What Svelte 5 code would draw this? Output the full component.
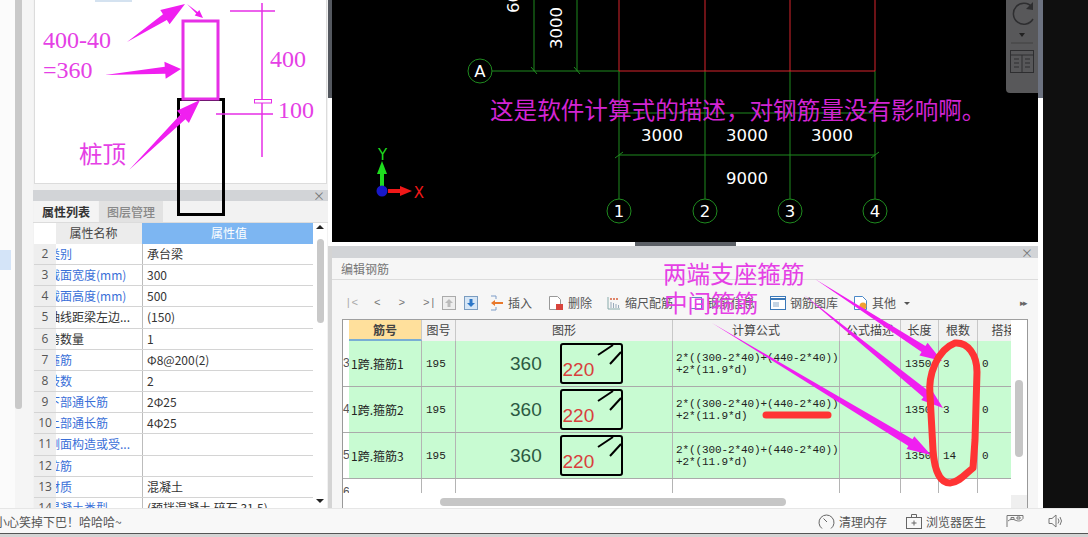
<script>
  const attrs = [
    { n: 2, name: '类别', value: '承台梁', link: true },
    { n: 3, name: '截面宽度(mm)', value: '300', link: true },
    { n: 4, name: '截面高度(mm)', value: '500', link: true },
    { n: 5, name: '轴线距梁左边...', value: '(150)' },
    { n: 6, name: '跨数量', value: '1' },
    { n: 7, name: '箍筋', value: 'Φ8@200(2)', link: true },
    { n: 8, name: '肢数', value: '2', link: true },
    { n: 9, name: '下部通长筋', value: '2Φ25', link: true },
    { n: 10, name: '上部通长筋', value: '4Φ25', link: true },
    { n: 11, name: '侧面构造或受...', value: '', link: true },
    { n: 12, name: '拉筋', value: '', link: true },
    { n: 13, name: '材质', value: '混凝土', link: true },
    { n: 14, name: '混凝土类型', value: '(预拌混凝土 碎石 31.5)', link: true }
  ];
  const bars = [
    { n: 3, name: '1跨.箍筋1', count: 3 },
    { n: 4, name: '1跨.箍筋2', count: 3 },
    { n: 5, name: '1跨.箍筋3', count: 14 }
  ];
  const heads = ['筋号', '图号', '图形', '计算公式', '公式描述', '长度', '根数', '搭接'];
  const gridX = [619, 705, 790, 875];

  function arrow(x1, y1, x2, y2, w, hl, bw) {
    const len = Math.hypot(x2 - x1, y2 - y1);
    const ux = (x2 - x1) / len, uy = (y2 - y1) / len;
    const px = -uy, py = ux;
    const bx = x2 - ux * hl, by = y2 - uy * hl;
    const pts = [
      [x1, y1],
      [bx + px * bw / 2, by + py * bw / 2],
      [bx + px * w / 2, by + py * w / 2],
      [x2, y2],
      [bx - px * w / 2, by - py * w / 2],
      [bx - px * bw / 2, by - py * bw / 2]
    ];
    return pts.map((p) => p.map((v) => v.toFixed(1)).join(',')).join(' ');
  }
  const arrows = [
    arrow(127, 42, 185, 4, 17, 24, 7),
    arrow(187, 4, 203, 18, 7, 8, 2),
    arrow(105, 75, 181, 69, 17, 16, 7),
    arrow(129, 170, 200, 100, 17, 24, 7),
    arrow(815, 279, 942, 361, 15, 22, 7),
    arrow(804, 295, 943, 408, 15, 22, 8),
    arrow(712, 323, 931, 455, 15, 24, 8)
  ];
</script>

<div class="page">
  <div class="main">
    <aside class="side">
      <div class="tree"><span class="tree-sel"></span></div>
      <div class="side-scroll"></div>
    </aside>

    <section class="left">
      <div class="preview"><span class="preview-sel"></span></div>
      <div class="panel-head"><span class="close">×</span></div>
      <div class="tabs">
        <span class="tab on">属性列表</span>
        <span class="tab">图层管理</span>
      </div>
      <div class="attr">
        <div class="attr-table">
          <div class="attr-head">
            <span class="a-blank"></span>
            <span class="a-name-h">属性名称</span>
            <span class="a-val-h">属性值</span>
          </div>
          {#each attrs as a}
            <div class="attr-row">
              <span class="a-num">{a.n}</span>
              <span class="a-name" class:link={a.link}><span class="a-clip">{a.name}</span></span>
              <span class="a-val">{a.value}</span>
            </div>
          {/each}
        </div>
        <div class="attr-scroll">
          <span class="up"></span>
          <span class="thumb"></span>
          <span class="down"></span>
        </div>
      </div>
    </section>

    <section class="center">
      <div class="canvas-wrap">
        <div class="edge"></div>
        <svg class="cad" viewBox="332 0 706 242" width="706" height="242">
          <g stroke="#1f8a1f" stroke-width="1" fill="none">
            <path d="M534 0V71M577 0V71M492 71H619" />
            {#each gridX as x}<path d="M{x} 71V199" />{/each}
            <path d="M619 113H875M619 155H875" />
            <path d="M531 67l6 7M574 67l6 7M615 158l8-6M871 158l8-6" />
            <circle cx="480" cy="71" r="12" />
            {#each gridX as x}<circle cx={x} cy="211" r="12" />{/each}
          </g>
          <g stroke="#d8242c" stroke-width="1" fill="none">
            <path d="M619 71H875" />
            {#each gridX as x}<path d="M{x} 0V71" />{/each}
          </g>
          <g class="cad-text">
            <text x="480" y="76.500" text-anchor="middle">A</text>
            {#each gridX as x, i}<text {x} y="216.500" text-anchor="middle">{i + 1}</text>{/each}
            <text x="662" y="141" text-anchor="middle">3000</text>
            <text x="747" y="141" text-anchor="middle">3000</text>
            <text x="832" y="141" text-anchor="middle">3000</text>
            <text x="747" y="184" text-anchor="middle">9000</text>
            <text transform="translate(562 28) rotate(-90)" text-anchor="middle">3000</text>
            <text transform="translate(519 -8) rotate(-90)" text-anchor="middle">6000</text>
          </g>
          <path d="M382 188V166" stroke="#1edc1e" stroke-width="4" />
          <polygon points="382,161 377,174 387,174" fill="#1edc1e" />
          <path d="M388 191H404" stroke="#f01818" stroke-width="4" />
          <polygon points="412,191 400,186 400,196" fill="#f01818" />
          <circle cx="382" cy="191" r="5.500" fill="#1818c8" />
          <text class="axis y" x="382.500" y="160" text-anchor="middle">Y</text>
          <text class="axis x" x="419" y="198" text-anchor="middle">X</text>
          <text class="note" x="490" y="119">这是软件计算式的描述，对钢筋量没有影响啊。</text>
        </svg>
        <div class="viewtool">
          <svg viewBox="0 0 32 93" width="32" height="93">
            <path d="M26 7A10.500 10.500 0 1 0 27 19" fill="none" stroke="#2e2e30" stroke-width="1.500" />
            <polygon points="27,2 27,10 20,9" fill="#2e2e30" />
            <polygon points="13,33 19,33 16,37" fill="#222" />
            <path d="M5 43H27" stroke="#404040" />
            <rect x="4.500" y="50.500" width="23" height="22" fill="none" stroke="#2e2e30" />
            <path d="M4.500 55H27.500M16 55V72.500M8 59h5M19 59h5M8 63h5M19 63h5M8 67h5M19 67h5" stroke="#2e2e30" />
          </svg>
        </div>
        <div class="edge edge-r"></div>
      </div>
      <div class="handle-row"><span class="handle"></span></div>
      <div class="rebar">
        <div class="panel-head b"><span class="close">×</span></div>
        <div class="rebar-title">编辑钢筋</div>
        <div class="toolbar">
          <span class="nav first">|&lt;</span>
          <span class="nav">&lt;</span>
          <span class="nav">&gt;</span>
          <span class="nav last">&gt;|</span>
          <svg class="tico a" viewBox="0 0 14 14" width="14" height="14"><rect x=".5" y=".5" width="13" height="13" fill="#eee" stroke="#aaa" /><path d="M7 3l4 4H8.500v4h-3V7H3z" fill="#bbb" /></svg>
          <svg class="tico b" viewBox="0 0 14 14" width="14" height="14"><rect x=".5" y=".5" width="13" height="13" fill="#d6e6f6" stroke="#7a9cc0" /><path d="M7 11L3 7h2.500V3h3v4H11z" fill="#2b76c8" /></svg>
          <svg class="tico c" viewBox="0 0 14 16" width="14" height="16"><path d="M1 1h5M1 15h5M6 1v3M6 12v3" stroke="#7c9cc8" fill="none" /><path d="M1 8l4-3v2h8v2H5v2z" fill="#e8782c" /></svg>
          <span class="lbl">插入</span>
          <svg class="tico d" viewBox="0 0 16 16" width="16" height="16"><path d="M1.500 1.500h8l3 3v10h-11z" fill="#fff" stroke="#999" /><rect x="8" y="9" width="7" height="6" fill="#d8443c" /></svg>
          <span class="lbl">删除</span>
          <svg class="tico e" viewBox="0 0 14 14" width="14" height="14"><path d="M1 1v12h12" stroke="#8aa" fill="none" /><path d="M3 3h9" stroke="#d8603c" stroke-width="1.500" stroke-dasharray="2 1" /><path d="M4 6v6M6.500 7v5M9 8v4M11.500 9v3" stroke="#9ab" /></svg>
          <span class="lbl">缩尺配筋</span>
          <svg class="tico f" viewBox="0 0 14 14" width="14" height="14"><rect x="1.500" y="1.500" width="11" height="11" fill="#fff" stroke="#5a8cc0" /></svg>
          <span class="lbl">钢筋信息</span>
          <svg class="tico h" viewBox="0 0 16 14" width="16" height="14"><rect x=".5" y=".5" width="15" height="13" fill="#fff" stroke="#3a78b8" /><path d="M1 3h14" stroke="#3a78b8" stroke-width="2" /><rect x="3" y="6" width="6" height="5" fill="#c4d4e4" /></svg>
          <span class="lbl">钢筋图库</span>
          <svg class="tico i" viewBox="0 0 15 16" width="15" height="16"><path d="M1.500 1.500h8l4 4v9h-12z" fill="#fff" stroke="#4a88c8" /><circle cx="10" cy="11" r="3.500" fill="#f0a030" /></svg>
          <span class="lbl">其他</span>
          <span class="drop"></span>
          <span class="more">▸▸</span>
        </div>
        <div class="sheet">
          <div class="sheet-head">
            <span class="c-idx"></span>
            {#each heads as h, i}<span class="sh" class:active={i === 0}>{h}</span>{/each}
          </div>
          {#each bars as b}
            <div class="sheet-row">
              <span class="c-idx num">{b.n}</span>
              <span class="cell bar-name">{b.name}</span>
              <span class="cell sim">195</span>
              <span class="cell shape">
                <span class="len">360</span>
                <span class="hoop">
                  <svg viewBox="0 0 63 41" width="63" height="41">
                    <rect x="1" y="1" width="61" height="39" rx="2" fill="none" stroke="#000" stroke-width="2" />
                    <path d="M38 12L53 2M50 21L61 9" stroke="#000" stroke-width="2" fill="none" />
                    <text x="2.500" y="33">220</text>
                  </svg>
                </span>
              </span>
              <span class="cell formula">2*((300-2*40)+(440-2*40))<br />+2*(11.9*d)</span>
              <span class="cell"></span>
              <span class="cell sim">1350</span>
              <span class="cell sim">{b.count}</span>
              <span class="cell sim">0</span>
            </div>
          {/each}
          <div class="sheet-row blank">
            <span class="c-idx num">6</span>
            <span class="cell"></span><span class="cell"></span><span class="cell"></span><span class="cell"></span><span class="cell"></span><span class="cell"></span><span class="cell"></span><span class="cell"></span>
          </div>
          <div class="hscroll"><span></span></div>
          <div class="vscroll"><span></span></div>
          <div class="corner"></div>
        </div>
      </div>
    </section>

    <div class="gutter"></div>
    <div class="black"></div>
  </div>

  <footer class="status">
    <span class="msg">小心笑掉下巴！哈哈哈~</span>
    <svg class="s1" viewBox="0 0 17 17" width="17" height="17"><path d="M4 15.500A7.500 7.500 0 1 1 13 15.500" fill="none" stroke="#666" /><path d="M5.500 5.500L9 9" stroke="#666" /></svg>
    <span class="st">清理内存</span>
    <svg class="s2" viewBox="0 0 16 15" width="16" height="15"><rect x=".5" y="3.500" width="15" height="11" fill="none" stroke="#666" /><path d="M5.500 3.500V.5h5v3M8 6.500v5M5.500 9h5" fill="none" stroke="#666" /></svg>
    <span class="st">浏览器医生</span>
    <svg class="s3" viewBox="0 0 18 14" width="18" height="14"><path d="M1 13V1.500h16v3c-2 3-5 3-8 1.500-2-1-5-1-7 1" fill="none" stroke="#777" /><path d="M5 3.500h3v2H5zM11 3h3v2h-3z" fill="none" stroke="#777" /></svg>
    <svg class="s4" viewBox="0 0 15 14" width="15" height="14"><path d="M1 4.500h3L8 1v12L4 9.500H1z" fill="none" stroke="#777" /><path d="M10 4.500q2 2.500 0 5M12 3q3 4 0 8" fill="none" stroke="#777" /></svg>
  </footer>
  <div class="edge-bottom"></div>

  <svg class="marks" viewBox="0 0 1088 537" width="1088" height="537">
    <rect x="178.500" y="99.500" width="45" height="115" fill="none" stroke="#000" stroke-width="3" />
    <rect x="183" y="21" width="35" height="78" fill="none" stroke="#e62fe6" stroke-width="3" />
    <path d="M262 3V157M230 11H275M216 114H273" stroke="#e62fe6" stroke-width="1.500" fill="none" />
    <rect x="254.500" y="99.500" width="17" height="3.500" fill="#fff" stroke="#e62fe6" />
    {#each arrows as p}<polygon points={p} fill="#f01ff0" />{/each}
    <text class="lat" x="43" y="48">400-40</text>
    <text class="lat" x="43" y="78">=360</text>
    <text class="lat" x="270" y="67">400</text>
    <text class="lat" x="278" y="118">100</text>
    <text class="cjk" x="79" y="163">桩顶</text>
    <text class="cjk" x="663" y="283">两端支座箍筋</text>
    <text class="cjk" x="664" y="312">中间箍筋</text>
    <path class="loop" d="M930 395C928 375 937 350 955 343C968 342 977 355 977 372L975 440L973 468C966 473 960 482 950 483C938 483 934 465 933 450Z" />
    <path class="loop" d="M766 415H828" />
  </svg>
</div>

<style>
  :global(body) {
    margin: 0;
    background: #d4d4d4;
  }
  .page {
    position: relative;
    display: flex;
    flex-direction: column;
    width: 1088px;
    height: 537px;
    overflow: hidden;
    font: 12px "Noto Sans CJK SC", "Liberation Sans", sans-serif;
    color: #333;
  }
  .main {
    display: flex;
    height: 508px;
    flex: none;
  }
  .side {
    display: flex;
    width: 33px;
    flex: none;
    background: #f5f5f5;
  }
  .tree {
    width: 15px;
    background: #fbfbfb;
  }
  .tree-sel {
    display: block;
    width: 11px;
    height: 20px;
    margin-top: 250px;
    background: #d4e4f8;
  }
  .side-scroll {
    width: 7px;
    height: 409px;
    background: #c9c9c9;
    border-radius: 0 0 3px 3px;
  }
  .left {
    display: flex;
    flex-direction: column;
    width: 295px;
    flex: none;
    background: #f2f2f2;
  }
  .preview {
    height: 184px;
    flex: none;
    margin-left: 1px;
    margin-right: 1px;
    background: #fff;
    border: 1px solid #dcdcdc;
    border-top: 0;
    box-sizing: border-box;
  }
  .preview-sel {
    display: block;
    width: 37px;
    height: 2px;
    margin-left: 60px;
    background: #d4e2f0;
  }
  .panel-head {
    display: flex;
    justify-content: flex-end;
    align-items: center;
    height: 11px;
    margin-top: 6px;
    padding: 0 3px;
    background: #d2d4d7;
  }
  .panel-head.b {
    margin-top: 0;
    height: 12px;
    padding: 0 5px;
  }
  .close {
    color: #777;
    font-size: 12px;
    line-height: 11px;
  }
  .tabs {
    display: flex;
    height: 22px;
    flex: none;
    padding-left: 1px;
    background: #f2f2f2;
    border-bottom: 1px solid #dcdcdc;
    box-sizing: border-box;
  }
  .tab {
    display: flex;
    align-items: center;
    justify-content: center;
    width: 64px;
    background: #e2e2e2;
    color: #888;
    font-weight: 500;
    margin-right: 1px;
  }
  .tab.on {
    background: #f4f4f4;
    color: #333;
    font-weight: 700;
  }
  .attr {
    display: flex;
    flex: 1;
    min-height: 0;
    margin-left: 1px;
    margin-right: 1px;
    overflow: hidden;
    background: #fff;
  }
  .attr-table {
    width: 279px;
    flex: none;
  }
  .attr-head {
    display: grid;
    grid-template-columns: 22px 86px 171px;
    height: 20.800px;
    line-height: 20px;
    text-align: center;
  }
  .a-name-h {
    padding-right: 11px;
    background: #ececec;
    color: #444;
  }
  .a-val-h {
    padding-left: 3px;
    background: #7db6f2;
    color: #fff;
  }
  .attr-row {
    display: grid;
    grid-template-columns: 22px 86px 171px;
    height: 21.200px;
    box-sizing: border-box;
    border-bottom: 1px solid #d4d4d4;
    line-height: 20px;
  }
  .a-num {
    background: #eeeeee;
    color: #555;
    text-align: center;
    font-family: "Open Sans", sans-serif;
    font-size: 12px;
  }
  .a-name {
    overflow: hidden;
    white-space: nowrap;
    color: #333;
  }
  .a-name.link {
    color: #3a6fd8;
  }
  .a-clip {
    display: block;
    margin-left: -8px;
  }
  .a-val {
    border-left: 1px solid #bcbcbc;
    padding-left: 4px;
    white-space: nowrap;
    overflow: hidden;
  }
  .attr-scroll {
    position: relative;
    display: flex;
    flex-direction: column;
    align-items: center;
    flex: 1;
  }
  .up,
  .down {
    width: 0;
    height: 0;
    border-left: 4px solid transparent;
    border-right: 4px solid transparent;
  }
  .up {
    margin-top: 2px;
    border-bottom: 4px solid #222;
  }
  .down {
    margin-top: auto;
    margin-bottom: 5px;
    border-top: 4px solid #222;
  }
  .thumb {
    width: 7px;
    height: 84px;
    margin-top: 10px;
    background: #c9c9c9;
    border-radius: 4px;
  }
  .center {
    display: flex;
    flex-direction: column;
    width: 710px;
    flex: none;
  }
  .canvas-wrap {
    position: relative;
    display: flex;
    height: 242px;
    flex: none;
    background: #000;
    width: 706px;
    margin-left: 4px;
  }
  .edge {
    position: absolute;
    left: -4px;
    top: 0;
    width: 4px;
    height: 98px;
    background: #54585f;
  }
  .canvas-wrap::before {
    content: "";
    position: absolute;
    left: -4px;
    top: 98px;
    width: 4px;
    height: 144px;
    background: #fff;
  }
  .edge-r {
    left: 706px;
    width: 5px;
    background: #6c7280;
  }
  .cad {
    display: block;
  }
  .cad-text text {
    fill: #fff;
    font: 16.500px "DejaVu Sans", sans-serif;
  }
  .axis {
    font: 15px "DejaVu Sans", sans-serif;
  }
  .axis.y {
    fill: #1edc1e;
  }
  .axis.x {
    fill: #f01818;
  }
  .note {
    fill: #d324d3;
    font: 23.600px "Noto Sans CJK SC", sans-serif;
  }
  .viewtool {
    position: absolute;
    right: 0;
    top: 0;
    width: 32px;
    height: 93px;
    background: #58585a;
    border-radius: 0 0 0 4px;
  }
  .viewtool svg {
    display: block;
  }
  .handle-row {
    display: flex;
    justify-content: flex-start;
    height: 4px;
    flex: none;
    padding-left: 307px;
    background: #fff;
  }
  .handle {
    width: 101px;
    height: 4px;
    background: #5c6066;
  }
  .rebar {
    display: flex;
    flex-direction: column;
    flex: 1;
    min-height: 0;
    width: 706px;
    margin-left: 4px;
    background: #f6f6f6;
  }
  .rebar-title {
    display: flex;
    align-items: center;
    height: 22px;
    padding-left: 9px;
    flex: none;
    color: #777;
    border-bottom: 1px solid #dcdcdc;
    box-sizing: border-box;
  }
  .toolbar {
    display: flex;
    align-items: center;
    height: 39px;
    flex: none;
    padding-top: 6px;
    padding-left: 13px;
    color: #555;
    font-size: 12px;
    box-sizing: border-box;
  }
  .nav {
    flex: none;
    width: 24.500px;
    color: #777;
    font: 11px "Liberation Mono", monospace;
  }
  .nav.first {
    width: 29px;
    color: #aaa;
  }
  .nav.last {
    width: 19px;
  }
  .tico {
    flex: none;
  }
  .tico.b {
    margin-left: 8px;
  }
  .tico.c {
    margin-left: 12px;
  }
  .lbl {
    flex: none;
    margin-left: 4px;
    white-space: nowrap;
  }
  .tico.d {
    margin-left: 16px;
  }
  .tico.e {
    margin-left: 15px;
  }
  .tico.f {
    margin-left: 16px;
  }
  .tico.h {
    margin-left: 15px;
  }
  .tico.i {
    margin-left: 15px;
  }
  .drop {
    flex: none;
    width: 0;
    height: 0;
    margin-left: 8px;
    margin-top: 2px;
    border-left: 3px solid transparent;
    border-right: 3px solid transparent;
    border-top: 3px solid #555;
  }
  .more {
    flex: none;
    margin-left: 110px;
    font-size: 9px;
    letter-spacing: -2px;
    color: #666;
  }
  .sheet {
    position: relative;
    flex: 1;
    min-height: 0;
    width: 686px;
    margin-left: 10px;
    overflow: hidden;
    background: #fff;
    border-left: 1px solid #999;
    border-right: 1px solid #999;
    border-top: 1px solid #a0a0a0;
    box-sizing: border-box;
  }
  .sheet-head,
  .sheet-row {
    display: grid;
    grid-template-columns: 6px 73px 34px 217px 167px 61px 38px 39px 52px;
  }
  .sheet-head {
    height: 21px;
    line-height: 20px;
    background: #f2f2f2;
    color: #444;
    text-align: center;
  }
  .sh {
    border-right: 1px solid #c8c8c8;
    white-space: nowrap;
    overflow: hidden;
    box-sizing: border-box;
  }
  .sh.active {
    background: #ffe09c;
    font-weight: 700;
    border-bottom: 2px solid #7aaed4;
  }
  .sheet-row {
    height: 46px;
    background: #c8fbd2;
    border-bottom: 1px solid #aaa;
    box-sizing: border-box;
  }
  .sheet-row.blank {
    height: 14px;
    background: #fff;
    border-bottom: 0;
  }
  .c-idx {
    background: #fff;
  }
  .num {
    color: #555;
    font: 12px "Liberation Sans", sans-serif;
    line-height: 45px;
    overflow: hidden;
  }
  .blank .num {
    line-height: 26px;
  }
  .cell {
    display: flex;
    align-items: center;
    padding-left: 2px;
    border-right: 1px solid #b4b4b4;
    box-sizing: border-box;
    overflow: hidden;
    white-space: nowrap;
    color: #222;
  }
  .bar-name {
    font-size: 12px;
  }
  .sim {
    font: 11px "Liberation Mono", monospace;
    padding-left: 4px;
  }
  .shape {
    padding-left: 54px;
  }
  .len {
    width: 50px;
    flex: none;
    font: 19px "Liberation Sans", sans-serif;
    color: #2c5a42;
  }
  .hoop {
    display: flex;
  }
  .hoop text {
    fill: #d8403c;
    font: 19px "Liberation Sans", sans-serif;
  }
  .formula {
    display: block;
    padding: 11px 0 0 3px;
    font: 11px/12px "Liberation Mono", monospace;
    letter-spacing: -.1px;
  }
  .hscroll {
    position: absolute;
    left: 97px;
    top: 178px;
    width: 346px;
    height: 9px;
    background: #fff;
  }
  .hscroll span {
    display: block;
    height: 8px;
    background: #c6c6c6;
    border-radius: 4px;
  }
  .vscroll {
    position: absolute;
    right: 0;
    top: 0;
    bottom: 0;
    width: 16px;
    background: #fff;
  }
  .vscroll span {
    display: block;
    width: 8px;
    height: 77px;
    margin: 60px 0 0 4px;
    background: #c6c6c6;
    border-radius: 4px;
  }
  .corner {
    position: absolute;
    right: 0;
    bottom: 0;
    width: 16px;
    height: 13px;
    background: #efefef;
  }
  .gutter {
    width: 5px;
    flex: none;
    background: #fff;
  }
  .black {
    flex: 1;
    background: #0f0f0f;
  }
  .status {
    position: relative;
    display: flex;
    align-items: center;
    height: 25px;
    flex: none;
    background: #f8f8f8;
    color: #555;
    border-top: 1px solid #e6e6e6;
    box-sizing: border-box;
    font-size: 12px;
  }
  .msg {
    margin-left: -5px;
    width: 823px;
    flex: none;
    white-space: nowrap;
  }
  .st {
    margin-left: 4px;
    white-space: nowrap;
  }
  .s2 {
    margin-left: 19px;
  }
  .s3 {
    margin-left: 20px;
  }
  .s4 {
    margin-left: 24px;
  }
  .edge-bottom {
    flex: 1;
    background: #d4d4d4;
    border-top: 1px solid #555;
  }
  .marks {
    position: absolute;
    left: 0;
    top: 0;
    pointer-events: none;
  }
  .lat {
    fill: #e540e5;
    font: 24px "Liberation Serif", serif;
  }
  .cjk {
    fill: #e540e5;
    font: 23.600px "Noto Sans CJK SC", sans-serif;
  }
  .loop {
    fill: none;
    stroke: #ff3434;
    stroke-width: 7;
    stroke-linecap: round;
    stroke-linejoin: round;
  }
</style>
